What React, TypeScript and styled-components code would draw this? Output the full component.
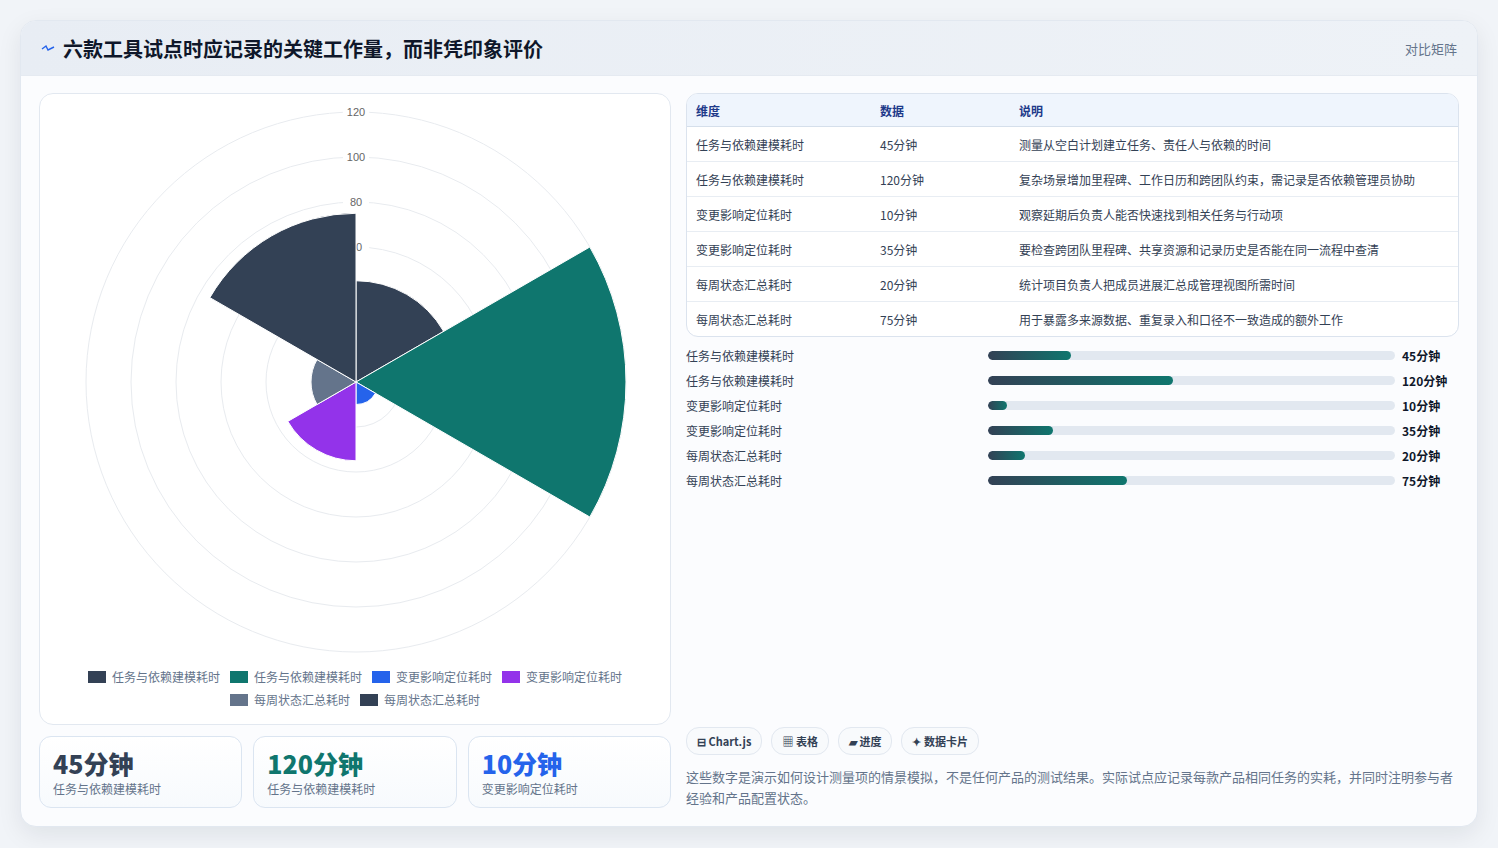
import React from 'react';
import styled, { createGlobalStyle } from 'styled-components';

const GlobalStyle = createGlobalStyle`
  html, body { margin: 0; padding: 0; background: #f1f4f8; }
  body { font-family: "Noto Sans CJK SC", "Noto Sans", sans-serif; color: #1e293b; }
`;

const Page = styled.div`
  padding: 20px 20px 0 20px;
  height: 828px;
`;

const Shell = styled.div`
  width: 1456px;
  height: 805px;
  background: #fbfcfe;
  border: 1px solid #e2e8f0;
  border-radius: 16px;
  box-shadow: 0 8px 24px rgba(15, 23, 42, 0.08);
  overflow: hidden;
  display: flex;
  flex-direction: column;
`;

const Header = styled.div`
  height: 54px;
  flex: none;
  display: flex;
  align-items: center;
  justify-content: space-between;
  padding: 0 20px;
  background: linear-gradient(90deg, #e8edf4, #eef2f7);
  border-bottom: 1px solid #e5eaf1;
`;

const Title = styled.h1`
  margin: 0;
  display: flex;
  align-items: center;
  gap: 8px;
  font-size: 20px;
  font-weight: 700;
  color: #0f172a;
`;

const HeaderTag = styled.span`
  font-size: 13px;
  color: #64748b;
`;

const Body = styled.div`
  flex: 1;
  display: grid;
  grid-template-columns: 632px 1fr;
  gap: 15px;
  padding: 17px 18px 18px 18px;
`;

const LeftCol = styled.div`
  display: flex;
  flex-direction: column;
  gap: 11px;
`;

const ChartCard = styled.div`
  height: 630px;
  background: #fff;
  border: 1px solid #e2e8f0;
  border-radius: 14px;
  display: flex;
  flex-direction: column;
  align-items: center;
`;

const Legend = styled.div`
  display: flex;
  flex-wrap: wrap;
  justify-content: center;
  gap: 6px 10px;
  width: 560px;
  margin-top: 4px;
`;

const LegendItem = styled.span`
  display: flex;
  align-items: center;
  gap: 6px;
  font-size: 12px;
  color: #64748b;
`;

const Swatch = styled.i<{ $c: string }>`
  width: 18px;
  height: 12px;
  background: ${p => p.$c};
`;

const Stats = styled.div`
  display: grid;
  grid-template-columns: repeat(3, 1fr);
  gap: 11px;
`;

const StatCard = styled.div`
  height: 72px;
  box-sizing: border-box;
  padding: 9px 13px;
  border: 1px solid #dbe5f1;
  border-radius: 12px;
  background: linear-gradient(180deg, #ffffff, #f7fafd);
`;

const StatValue = styled.div<{ $c: string }>`
  font-size: 25px;
  font-weight: 800;
  line-height: 34px;
  color: ${p => p.$c};
`;

const StatLabel = styled.div`
  font-size: 12px;
  color: #64748b;
`;

const RightCol = styled.div`
  display: flex;
  flex-direction: column;
`;

const Table = styled.table`
  width: 100%;
  border-collapse: separate;
  border-spacing: 0;
  border: 1px solid #dbe3ee;
  border-radius: 12px;
  overflow: hidden;
  font-size: 12px;
  background: #fff;
  th {
    text-align: left;
    font-weight: 600;
    color: #1e3a8a;
    background: #eff5fd;
    height: 32px;
    padding: 0 9px;
    border-bottom: 1px solid #d5dfeb;
  }
  td {
    height: 34px;
    padding: 0 9px;
    color: #334155;
    border-bottom: 1px solid #e8edf3;
  }
  tr:last-child td { border-bottom: none; }
`;

const Bars = styled.div`
  margin-top: 10px;
  display: flex;
  flex-direction: column;
  gap: 9px;
`;

const BarRow = styled.div`
  display: grid;
  grid-template-columns: 293px 407px 1fr;
  align-items: center;
  gap: 9px;
  font-size: 12px;
  height: 16px;
`;

const BarLabel = styled.span`
  color: #334155;
`;

const Track = styled.div`
  height: 9px;
  border-radius: 5px;
  background: #e2e8f0;
  overflow: hidden;
`;

const Fill = styled.div`
  height: 100%;
  border-radius: 5px;
  background: linear-gradient(90deg, #334155, #0f766e);
`;

const BarValue = styled.span`
  font-weight: 700;
  color: #0f172a;
  margin-left: -2px;
`;

const Footer = styled.div`
  margin-top: auto;
`;

const Chips = styled.div`
  display: flex;
  gap: 9px;
`;

const Chip = styled.span`
  display: inline-flex;
  align-items: center;
  gap: 3px;
  height: 26px;
  padding: 0 10px;
  border: 1px solid #e2e8f0;
  border-radius: 13px;
  background: #f8fafc;
  font-size: 11px;
  color: #334155;
  font-weight: 600;
`;

const Note = styled.p`
  margin: 11px 0 0;
  font-size: 13px;
  line-height: 21px;
  color: #64748b;
`;

const rows = [
  ['任务与依赖建模耗时', 45, '测量从空白计划建立任务、责任人与依赖的时间', '#334155', 20.4],
  ['任务与依赖建模耗时', 120, '复杂场景增加里程碑、工作日历和跨团队约束，需记录是否依赖管理员协助', '#0f766e', 45.5],
  ['变更影响定位耗时', 10, '观察延期后负责人能否快速找到相关任务与行动项', '#2563eb', 4.7],
  ['变更影响定位耗时', 35, '要检查跨团队里程碑、共享资源和记录历史是否能在同一流程中查清', '#9333ea', 16],
  ['每周状态汇总耗时', 20, '统计项目负责人把成员进展汇总成管理视图所需时间', '#64748b', 9.1],
  ['每周状态汇总耗时', 75, '用于暴露多来源数据、重复录入和口径不一致造成的额外工作', '#334155', 34.2],
] as const;

const CX = 316;
const CY = 288;
const K = 2.25;

const wedge = (i: number, v: number) => {
  const r = v * K;
  const a0 = ((-90 + i * 60) * Math.PI) / 180;
  const a1 = ((-30 + i * 60) * Math.PI) / 180;
  const x0 = CX + r * Math.cos(a0);
  const y0 = CY + r * Math.sin(a0);
  const x1 = CX + r * Math.cos(a1);
  const y1 = CY + r * Math.sin(a1);
  return `M${CX} ${CY} L${x0} ${y0} A${r} ${r} 0 0 1 ${x1} ${y1} Z`;
};

const PolarChart = () => (
  <svg width="630" height="570" viewBox="0 0 630 570">
    {[20, 40, 60, 80, 100, 120].map(t => (
      <circle key={t} cx={CX} cy={CY} r={t * K} fill="none" stroke="#e8ebef" />
    ))}
    {[60, 80, 100, 120].map(t => (
      <g key={t}>
        <rect x={CX - 13} y={CY - t * K - 7} width="26" height="14" fill="#fff" />
        <text x={CX} y={CY - t * K + 4} textAnchor="middle" fontSize="11" fill="#666" fontFamily="Liberation Sans, sans-serif">{t}</text>
      </g>
    ))}
    {rows.map((r, i) => (
      <path key={i} d={wedge(i, r[1])} fill={r[3]} stroke="#fff" strokeWidth="1" />
    ))}
  </svg>
);

export default function App() {
  return (
    <Page>
      <GlobalStyle />
      <Shell>
        <Header>
          <Title>
            <svg width="14" height="10" viewBox="0 0 14 10">
              <path d="M1 6 L5 3 L7 7 L13 4" fill="none" stroke="#2563eb" strokeWidth="1.4" />
            </svg>
            六款工具试点时应记录的关键工作量，而非凭印象评价
          </Title>
          <HeaderTag>对比矩阵</HeaderTag>
        </Header>
        <Body>
          <LeftCol>
            <ChartCard>
              <PolarChart />
              <Legend>
                {rows.map((r, i) => (
                  <LegendItem key={i}>
                    <Swatch $c={r[3]} />
                    {r[0]}
                  </LegendItem>
                ))}
              </Legend>
            </ChartCard>
            <Stats>
              {rows.slice(0, 3).map((r, i) => (
                <StatCard key={i}>
                  <StatValue $c={r[3]}>{r[1]}分钟</StatValue>
                  <StatLabel>{r[0]}</StatLabel>
                </StatCard>
              ))}
            </Stats>
          </LeftCol>
          <RightCol>
            <Table>
              <thead>
                <tr>
                  <th style={{ width: 166 }}>维度</th>
                  <th style={{ width: 121 }}>数据</th>
                  <th>说明</th>
                </tr>
              </thead>
              <tbody>
                {rows.map((r, i) => (
                  <tr key={i}>
                    <td>{r[0]}</td>
                    <td>{r[1]}分钟</td>
                    <td>{r[2]}</td>
                  </tr>
                ))}
              </tbody>
            </Table>
            <Bars>
              {rows.map((r, i) => (
                <BarRow key={i}>
                  <BarLabel>{r[0]}</BarLabel>
                  <Track>
                    <Fill style={{ width: `${r[4]}%` }} />
                  </Track>
                  <BarValue>{r[1]}分钟</BarValue>
                </BarRow>
              ))}
            </Bars>
            <Footer>
              <Chips>
                <Chip>⊟ Chart.js</Chip>
                <Chip>▦ 表格</Chip>
                <Chip>▰ 进度</Chip>
                <Chip>✦ 数据卡片</Chip>
              </Chips>
              <Note>
                这些数字是演示如何设计测量项的情景模拟，不是任何产品的测试结果。实际试点应记录每款产品相同任务的实耗，并同时注明参与者经验和产品配置状态。
              </Note>
            </Footer>
          </RightCol>
        </Body>
      </Shell>
    </Page>
  );
}
